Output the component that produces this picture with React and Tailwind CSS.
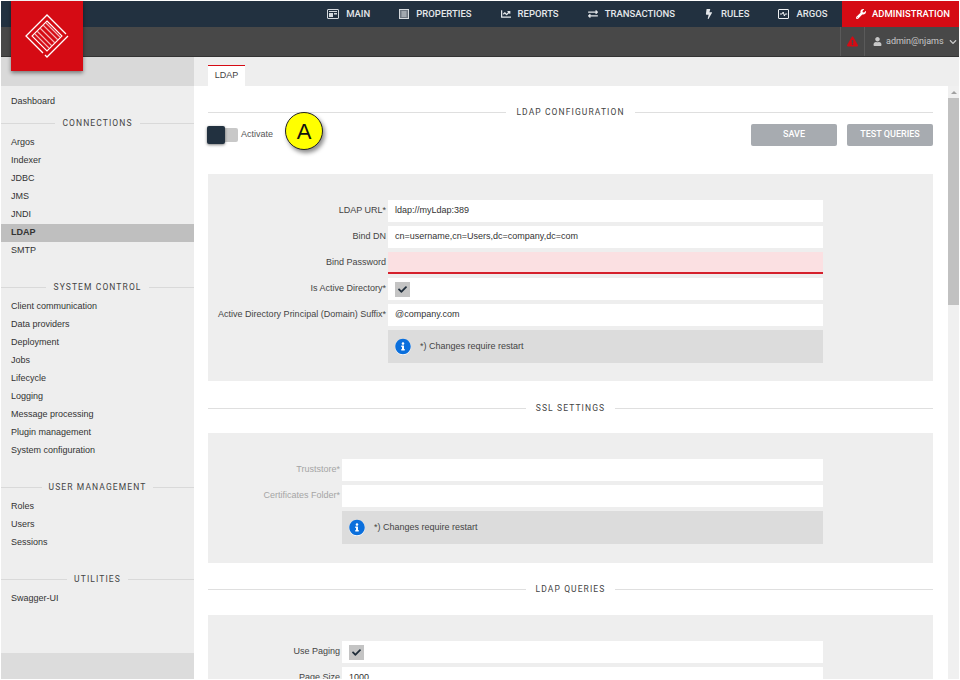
import React from "react";
import { FaWrench, FaBolt, FaExchangeAlt, FaChartLine, FaUser, FaExclamationTriangle, FaChevronDown, FaInfoCircle, FaCheck } from "react-icons/fa";

function MainIcon() {
  return (
    <svg width="12" height="10" viewBox="0 0 12 10" fill="none" stroke="#d5d9dd">
      <rect x="0.5" y="0.5" width="11" height="9" rx="0.5" />
      <rect x="2" y="2" width="8" height="1" fill="#d5d9dd" stroke="none" />
      <rect x="2" y="4" width="4" height="4" fill="#d5d9dd" stroke="none" />
      <rect x="7" y="4" width="3" height="1.5" fill="#d5d9dd" stroke="none" />
    </svg>
  );
}
function PropsIcon() {
  return (
    <svg width="10" height="10" viewBox="0 0 10 10" fill="none" stroke="#d5d9dd">
      <rect x="0.5" y="0.5" width="9" height="9" fill="#6d7680" />
      <path d="M2.5 3h5M2.5 5h5M2.5 7h5" />
    </svg>
  );
}
function ArgosIcon() {
  return (
    <svg width="11" height="10" viewBox="0 0 11 10" fill="none" stroke="#eef0f2">
      <rect x="0.5" y="0.5" width="10" height="9" rx="0.5" />
      <path d="M2 5h2l1.2-2 1.2 4 0.8-2h2" />
    </svg>
  );
}
function Logo() {
  return (
    <svg width="44" height="44" viewBox="0 0 44 44" fill="none" stroke="#fff">
      <path d="M18 4 L22 1 L26 4 M4 18 L1 22 L4 26" strokeWidth="1" opacity="0" />
      <path d="M20 3 L22 1 L41 20 M43 22 L24 41 L22 43 L20 41 M18 39 L1 22 L20 3" strokeWidth="1.3" transform="translate(0 0)" />
      <g stroke="#f5b5b8" strokeWidth="1.1">
        <path d="M22 7 L37 22 L22 37 L7 22 Z" stroke="#fff" />
        <path d="M15 14 L30 29 M18 11 L33 26 M12 17 L27 32 M21 9 L35 23 M10 20 L24 34" />
      </g>
    </svg>
  );
}

const navItems = [
  { label: "MAIN", icon: <MainIcon /> },
  { label: "PROPERTIES", icon: <PropsIcon /> },
  { label: "REPORTS", icon: <FaChartLine size={10} /> },
  { label: "TRANSACTIONS", icon: <FaExchangeAlt size={10} /> },
  { label: "RULES", icon: <FaBolt size={10} /> },
  { label: "ARGOS", icon: <ArgosIcon /> },
];

function SideHead({ children, className = "" }) {
  return (
    <div className={`flex items-center h-[18px] ${className}`}>
      <div className="flex-1 h-px bg-[#d9d9d9]" />
      <span className="px-[7px] text-[8.5px] tracking-[1.1px] text-[#444] font-['Roboto',sans-serif]">{children}</span>
      <div className="flex-1 h-px bg-[#d9d9d9]" />
    </div>
  );
}
function SideItem({ children, active }) {
  return (
    <div className={`h-[18px] pl-[10px] flex items-center text-[9px] text-[#333] ${active ? "bg-[#bfbfbf] font-bold" : ""}`}>{children}</div>
  );
}
function SectionTitle({ children, className = "" }) {
  return (
    <div className={`flex items-center h-[12px] ${className}`}>
      <div className="flex-1 h-px bg-[#dfdfdf]" />
      <span className="px-[10px] text-[8.5px] tracking-[1.1px] text-[#444] font-['Roboto',sans-serif]">{children}</span>
      <div className="flex-1 h-px bg-[#dfdfdf]" />
    </div>
  );
}
function Row({ label, labelW, dim, children, invalid }) {
  return (
    <div className="flex items-stretch h-[22px] mb-[4px]">
      <div className={`shrink-0 pr-[2px] flex items-center justify-end text-[9px] ${dim ? "text-[#a5a5a5]" : "text-[#444]"} ${labelW}`}>{label}</div>
      <div className={`flex-1 flex items-center pl-[7px] text-[9px] text-[#333] ${invalid ? "bg-[#fbe0e2] border-b-2 border-[#d5202c]" : "bg-white"}`}>{children}</div>
    </div>
  );
}
function Check() {
  return (
    <div className="w-[15px] h-[15px] bg-[#c4c4c4] flex items-center justify-center text-[#1f2d3a]">
      <FaCheck size={9} />
    </div>
  );
}
function Info({ labelW }) {
  return (
    <div className="flex">
      <div className={`shrink-0 ${labelW}`} />
      <div className="flex-1 h-[33px] bg-[#dcdcdc] flex items-center pl-[7px] text-[9px] text-[#444]">
        <span className="text-[#0b6fdc] bg-white rounded-full w-[16px] h-[16px] flex items-center justify-center"><FaInfoCircle size={17} /></span>
        <span className="ml-[9px]">*) Changes require restart</span>
      </div>
    </div>
  );
}

export default function App() {
  return (
    <div className="relative w-[960px] h-[680px] overflow-hidden bg-white pt-px pl-px font-['Liberation_Sans',Arial,sans-serif]">
      <div className="h-[26px] w-[958px] bg-[#223140] flex justify-end">
        {navItems.map((n) => (
          <div key={n.label} className="flex items-center gap-[7px] px-[14.5px] text-[9.5px] font-medium text-[#e4e7ea] font-['Roboto',sans-serif]">
            {n.icon}
            <span>{n.label}</span>
          </div>
        ))}
        <div className="w-[117px] bg-[#d50b14] flex items-center gap-[6px] pl-[14px] text-[9.5px] font-medium text-white font-['Roboto',sans-serif]">
          <FaWrench size={10} />
          <span>ADMINISTRATION</span>
        </div>
      </div>
      <div className="h-[30px] w-[958px] bg-[#484848] border-b border-[#333] flex justify-end">
        <div className="w-[24px] border-l border-[#5a5a5a] flex items-center justify-center text-[#d50b14]">
          <FaExclamationTriangle size={11} />
        </div>
        <div className="w-[95px] border-l border-[#5a5a5a] flex items-center pl-[8px] text-[9px] text-[#c8c8c8]">
          <FaUser size={9} />
          <span className="ml-[4px] font-['Roboto',sans-serif]">admin@njams</span>
          <FaChevronDown size={8} className="ml-[5px]" />
        </div>
      </div>
      <div className="flex h-[622px] w-[958px]">
        <aside className="w-[193px] bg-[#eeeeee] flex flex-col">
          <div className="h-[29px] bg-[#d9d9d9]" />
          <div className="flex-1 pt-[7px]">
            <SideItem>Dashboard</SideItem>
            <SideHead className="mt-[3px] mb-[2px]">CONNECTIONS</SideHead>
            {["Argos", "Indexer", "JDBC", "JMS", "JNDI"].map((t) => <SideItem key={t}>{t}</SideItem>)}
            <SideItem active>LDAP</SideItem>
            <SideItem>SMTP</SideItem>
            <SideHead className="mt-[18px] mb-[2px]">SYSTEM CONTROL</SideHead>
            {["Client communication", "Data providers", "Deployment", "Jobs", "Lifecycle", "Logging", "Message processing", "Plugin management", "System configuration"].map((t) => <SideItem key={t}>{t}</SideItem>)}
            <SideHead className="mt-[18px] mb-[2px]">USER MANAGEMENT</SideHead>
            {["Roles", "Users", "Sessions"].map((t) => <SideItem key={t}>{t}</SideItem>)}
            <SideHead className="mt-[18px] mb-[2px]">UTILITIES</SideHead>
            <SideItem>Swagger-UI</SideItem>
          </div>
          <div className="h-[26px] bg-[#dcdcdc]" />
        </aside>
        <main className="flex-1 flex flex-col overflow-hidden">
          <div className="h-[29px] shrink-0 bg-[#eeeeee] pl-[14px] flex items-end">
            <div className="w-[37px] h-[21px] bg-white border-t border-[#d50b14] flex items-center justify-center text-[9px] text-[#444]">LDAP</div>
          </div>
          <div className="flex-1 flex overflow-hidden">
            <div className="w-[739px] pl-[14px] shrink-0">
              <SectionTitle className="mt-[20px]">LDAP CONFIGURATION</SectionTitle>
              <div className="flex items-center justify-between h-[22px] mt-[6px]">
                <div className="flex items-center">
                  <div className="relative w-[30px] h-[14px] bg-[#c8c8c8] rounded-[2px] ml-0">
                    <div className="absolute left-[-1px] top-[-2px] w-[18px] h-[18px] bg-[#223140] rounded-[2px] shadow-[0_1px_3px_rgba(0,0,0,0.5)]" />
                  </div>
                  <span className="ml-[3px] text-[9px] text-[#555]">Activate</span>
                </div>
                <div className="flex gap-[10px]">
                  <div className="w-[86px] h-[22px] rounded-[2px] bg-[#a7abb0] text-white font-medium text-[9px] flex items-center justify-center font-['Roboto',sans-serif]">SAVE</div>
                  <div className="w-[86px] h-[22px] rounded-[2px] bg-[#a7abb0] text-white font-medium text-[9px] flex items-center justify-center font-['Roboto',sans-serif]">TEST QUERIES</div>
                </div>
              </div>
              <section className="mt-[28px] h-[207px] bg-[#eeeeee] pt-[26px] pr-[110px]">
                <Row label="LDAP URL*" labelW="w-[180px]">ldap://myLdap:389</Row>
                <Row label="Bind DN" labelW="w-[180px]">cn=username,cn=Users,dc=company,dc=com</Row>
                <Row label="Bind Password" labelW="w-[180px]" invalid />
                <Row label="Is Active Directory*" labelW="w-[180px]"><Check /></Row>
                <Row label="Active Directory Principal (Domain) Suffix*" labelW="w-[180px]">@company.com</Row>
                <Info labelW="w-[180px]" />
              </section>
              <SectionTitle className="mt-[21px]">SSL SETTINGS</SectionTitle>
              <section className="mt-[19px] h-[130px] bg-[#eeeeee] pt-[26px] pr-[110px]">
                <Row dim label="Truststore*" labelW="w-[134px]" />
                <Row dim label="Certificates Folder*" labelW="w-[134px]" />
                <Info labelW="w-[134px]" />
              </section>
              <SectionTitle className="mt-[20px]">LDAP QUERIES</SectionTitle>
              <section className="mt-[20px] h-[80px] bg-[#eeeeee] pt-[26px] pr-[110px]">
                <Row label="Use Paging" labelW="w-[134px]"><Check /></Row>
                <Row label="Page Size" labelW="w-[134px]">1000</Row>
              </section>
            </div>
            <div className="flex-1 flex justify-end">
              <div className="w-[11px] bg-[#f0f0f0] flex flex-col">
                <div className="h-[12px] flex items-center justify-center"><div className="border-x-[3px] border-x-transparent border-b-[3px] border-b-[#a0a0a0]" /></div>
                <div className="h-[207px] bg-[#c1c1c1]" />
              </div>
            </div>
          </div>
        </main>
      </div>
      <div className="absolute left-[11px] top-px w-[72px] h-[70px] bg-[#d50b14] shadow-[0_2px_4px_rgba(0,0,0,0.45)] flex items-center justify-center">
        <Logo />
      </div>
      <div className="absolute left-[285px] top-[112px] w-[38px] h-[38px] rounded-full bg-[#ffff00] border border-[#222] shadow-[2px_3px_4px_rgba(0,0,0,0.45)] flex items-center justify-center text-[22px] text-[#111]">A</div>
    </div>
  );
}
